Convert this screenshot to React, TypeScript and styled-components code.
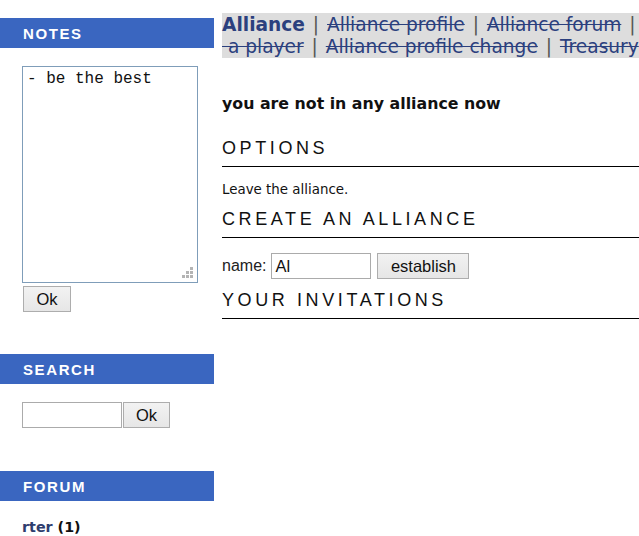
import React from "react";
import styled, { createGlobalStyle } from "styled-components";

const Global = createGlobalStyle`
  html, body {
    margin: 0;
    padding: 0;
    overflow: hidden;
    background: #ffffff;
  }
  body {
    font-family: "DejaVu Sans", Verdana, sans-serif;
    color: #111;
  }
`;

const Page = styled.div`
  display: flex;
  align-items: flex-start;
  width: 720px;
`;

const Sidebar = styled.aside`
  width: 214px;
  flex: none;
  padding-top: 18px;
  display: flex;
  flex-direction: column;
`;

const SideHeading = styled.div<{ $gap?: number }>`
  height: 30px;
  margin-top: ${(p) => p.$gap ?? 0}px;
  background: #3a66c0;
  color: #ffffff;
  font-family: "Liberation Sans", Arial, sans-serif;
  font-weight: bold;
  font-size: 15px;
  letter-spacing: 1.6px;
  padding-left: 23px;
  display: flex;
  align-items: center;
`;

const NotesWrap = styled.div`
  position: relative;
  margin: 18px 0 0 22px;
  width: 176px;
  height: 217px;
`;

const NotesArea = styled.textarea`
  box-sizing: border-box;
  width: 176px;
  height: 217px;
  border: 1px solid #7f9db9;
  padding: 3px 4px;
  margin: 0;
  resize: none;
  font-family: "Liberation Mono", "Courier New", monospace;
  font-size: 16px;
  line-height: 18px;
  color: #111;
  outline: none;
  display: block;
`;

const Grip = styled.svg`
  position: absolute;
  right: 5px;
  bottom: 5px;
  width: 11px;
  height: 11px;
`;

const Button = styled.button<{ $w: number }>`
  box-sizing: border-box;
  width: ${(p) => p.$w}px;
  height: 26px;
  margin: 0;
  padding: 0;
  border: 1px solid #adadad;
  background: linear-gradient(#f2f2f2, #e6e6e6);
  font-family: "Liberation Sans", Arial, sans-serif;
  font-size: 16.5px;
  color: #111;
  border-radius: 0;
`;

const OkRow = styled.div`
  margin: 3px 0 0 23px;
  display: flex;
`;

const SearchRow = styled.form`
  margin: 18px 0 0 22px;
  display: flex;
  gap: 1px;
`;

const TextInput = styled.input<{ $w: number }>`
  box-sizing: border-box;
  width: ${(p) => p.$w}px;
  height: 26px;
  margin: 0;
  border: 1px solid #ababab;
  padding: 0 3px;
  font-family: "Liberation Sans", Arial, sans-serif;
  font-size: 16.5px;
  color: #111;
  outline: none;
  border-radius: 0;
`;

const ForumLine = styled.div`
  margin: 18px 0 0 22px;
  font-family: "DejaVu Sans", Verdana, sans-serif;
  font-size: 14.3px;
  font-weight: bold;
  line-height: 17px;
`;

const ForumLink = styled.a`
  color: #2e3d6e;
  text-decoration: none;
`;

const Main = styled.main`
  margin-left: 8px;
  padding-top: 13px;
  width: 480px;
  flex: none;
`;

const Nav = styled.nav`
  background: #dddddd;
  font-family: "DejaVu Sans", Verdana, sans-serif;
  font-size: 18.6px;
  line-height: 22px;
  padding: 1px 0 0;
  color: #555;
`;

const NavLink = styled.a<{ $current?: boolean }>`
  color: #2b407e;
  white-space: nowrap;
  font-weight: ${(p) => (p.$current ? "bold" : "normal")};
  text-decoration: ${(p) => (p.$current ? "none" : "line-through")};
`;

const Sep = styled.span`
  padding: 0 2px;
  color: #555;
`;

const Statement = styled.p`
  margin: 36px 0 25px;
  font-family: "DejaVu Sans", Verdana, sans-serif;
  font-size: 15.8px;
  line-height: 19px;
  font-weight: bold;
  color: #111;
`;

const SectionTitle = styled.h2`
  margin: 11px 0 15px;
  padding-bottom: 7px;
  border-bottom: 1px solid #000;
  font-family: "Liberation Sans", Arial, sans-serif;
  font-weight: normal;
  font-size: 18px;
  line-height: 21px;
  letter-spacing: 3.6px;
  color: #111;
`;

const Plain = styled.p`
  margin: 0;
  font-family: "DejaVu Sans", Verdana, sans-serif;
  font-size: 13.4px;
  line-height: 16px;
  color: #111;
`;

const FormRow = styled.form`
  display: flex;
  align-items: center;
  margin: 0;
`;

const Label = styled.label`
  font-family: "Liberation Sans", Arial, sans-serif;
  font-size: 16px;
  color: #222;
  margin-right: 5px;
`;

const EstablishButton = styled(Button)`
  margin-left: 6px;
`;

const InviteLink = styled(NavLink)`
  white-space: normal;
`;

const navItems = ["Alliance profile", "Alliance forum"];

export default function App() {
  return (
    <>
      <Global />
      <Page>
        <Sidebar>
          <SideHeading>NOTES</SideHeading>
          <NotesWrap>
            <NotesArea defaultValue="- be the best" />
            <Grip viewBox="0 0 11 11">
              <g fill="#b4b4b4">
                <rect x="8" y="0" width="3" height="3" />
                <rect x="4" y="4" width="3" height="3" />
                <rect x="8" y="4" width="3" height="3" />
                <rect x="0" y="8" width="3" height="3" />
                <rect x="4" y="8" width="3" height="3" />
                <rect x="8" y="8" width="3" height="3" />
              </g>
            </Grip>
          </NotesWrap>
          <OkRow>
            <Button $w={48} type="button">Ok</Button>
          </OkRow>

          <SideHeading $gap={42}>SEARCH</SideHeading>
          <SearchRow onSubmit={(e) => e.preventDefault()}>
            <TextInput $w={100} type="text" />
            <Button $w={47} type="submit">Ok</Button>
          </SearchRow>

          <SideHeading $gap={43}>FORUM</SideHeading>
          <ForumLine>
            <ForumLink href="#">rter</ForumLink> (1)
          </ForumLine>
        </Sidebar>

        <Main>
          <Nav>
            <NavLink $current href="#">Alliance</NavLink>
            {navItems.map((item) => (
              <React.Fragment key={item}>
                {" "}<Sep>|</Sep>{" "}
                <NavLink href="#">{item}</NavLink>
              </React.Fragment>
            ))}
            {" "}<Sep>|</Sep>{" "}
            <InviteLink href="#">{"Invite \u00a0a\u00a0player"}</InviteLink>
            {" "}<Sep>|</Sep>{" "}
            <NavLink href="#">Alliance profile change</NavLink>
            {" "}<Sep>|</Sep>{" "}
            <NavLink href="#">Treasury</NavLink>
          </Nav>

          <Statement>you are not in any alliance now</Statement>

          <SectionTitle>OPTIONS</SectionTitle>
          <Plain>Leave the alliance.</Plain>

          <SectionTitle>CREATE AN ALLIANCE</SectionTitle>
          <FormRow onSubmit={(e) => e.preventDefault()}>
            <Label>name:</Label>
            <TextInput $w={100} type="text" defaultValue="Al" />
            <EstablishButton $w={92} type="submit">establish</EstablishButton>
          </FormRow>

          <SectionTitle>YOUR INVITATIONS</SectionTitle>
        </Main>
      </Page>
    </>
  );
}
